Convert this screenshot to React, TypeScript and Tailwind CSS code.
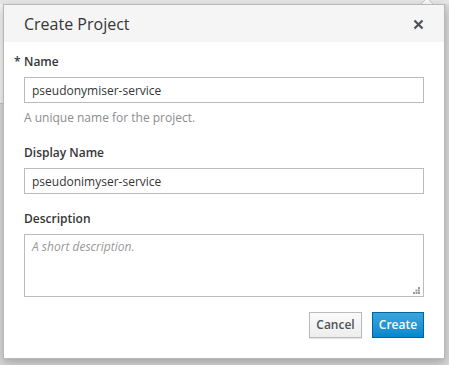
import React from "react";

export default function App() {
  return (
    <div
      className="relative w-[449px] h-[365px] overflow-hidden bg-[#d9d9d9]"
      style={{ fontFamily: '"Open Sans", "Liberation Sans", sans-serif' }}
    >
      {/* page behind */}
      <div className="absolute left-0 top-[4px] w-[3px] h-[100px] bg-[#f3f3f3] border-b border-[#c4c4c4]" />
      <div className="absolute left-0 top-0 w-full h-[4px] bg-[#e6e6e6]" />
      {/* popover arrow */}
      <svg className="absolute left-[418px] top-[-2px]" width="18" height="9" viewBox="0 0 18 9">
        <path d="M1 8 L9 0 L17 8 Z" fill="#fafafa" stroke="#c8c8c8" strokeWidth="1" />
      </svg>

      <div className="pt-[4px] pl-[3px]">
        <div className="w-[442px] h-[355px] bg-white border border-[#b8b8b8] shadow-[0_4px_10px_rgba(0,0,0,0.25)] flex flex-col relative">
          {/* header */}
          <div className="h-[37px] bg-[#f5f5f5] flex items-center justify-between pl-[20px] pr-[20px]">
            <h4 className="text-[16px] leading-[20px] text-[#363636] font-normal">Create Project</h4>
            <svg width="11" height="11" viewBox="0 0 11 11" className="mt-[1px]">
              <path d="M1.5 1.5 L9.5 9.5 M9.5 1.5 L1.5 9.5" stroke="#4d5258" strokeWidth="2.2" strokeLinecap="butt" />
            </svg>
          </div>

          {/* body */}
          <div className="pl-[20px] pr-[20px] pt-[11px] flex flex-col text-[12px] text-[#363636]">
            <label className="relative font-semibold leading-[18px] h-[18px]">
              <span className="absolute left-[-10px] top-0">*</span>
              Name
            </label>
            <input
              readOnly
              value="pseudonymiser-service"
              className="mt-[6px] w-[400px] h-[26px] border border-[#bbbbbb] px-[7px] text-[12px] text-[#363636] outline-none"
              style={{ fontFamily: '"Open Sans", "Liberation Sans", sans-serif' }}
            />
            <div className="mt-[6px] leading-[18px] text-[#8b8d8f]">A unique name for the project.</div>

            <label className="mt-[17px] font-semibold leading-[18px] h-[18px]">Display Name</label>
            <input
              readOnly
              value="pseudonimyser-service"
              className="mt-[6px] w-[400px] h-[26px] border border-[#bbbbbb] px-[7px] text-[12px] text-[#363636] outline-none"
              style={{ fontFamily: '"Open Sans", "Liberation Sans", sans-serif' }}
            />

            <label className="mt-[16px] font-semibold leading-[18px] h-[18px]">Description</label>
            <div className="relative mt-[6px] w-[400px] h-[63px]">
              <textarea
                readOnly
                placeholder="A short description."
                className="w-full h-full border border-[#bbbbbb] px-[7px] py-[3px] text-[12px] leading-[18px] resize-none outline-none placeholder:italic placeholder:text-[#999999]"
                style={{ fontFamily: '"Open Sans", "Liberation Sans", sans-serif' }}
              />
              <svg className="absolute right-[4px] bottom-[3px]" width="7" height="7" viewBox="0 0 7 7">
                <rect x="5" y="0" width="2" height="2" fill="#9a9a9a" />
                <rect x="2.5" y="2.5" width="2" height="2" fill="#9a9a9a" />
                <rect x="5" y="2.5" width="2" height="2" fill="#9a9a9a" />
                <rect x="0" y="5" width="2" height="2" fill="#9a9a9a" />
                <rect x="2.5" y="5" width="2" height="2" fill="#9a9a9a" />
                <rect x="5" y="5" width="2" height="2" fill="#9a9a9a" />
              </svg>
            </div>

            <div className="mt-[15px] flex justify-end gap-[10px]">
              <button className="w-[53px] h-[26px] border border-[#bbbbbb] bg-gradient-to-b from-[#fafafa] to-[#ededed] text-[12px] font-semibold text-[#4d5258] shadow-[0_1px_1px_rgba(0,0,0,0.1)]">
                Cancel
              </button>
              <button className="w-[52px] h-[26px] border border-[#00659c] bg-gradient-to-b from-[#39a5dc] to-[#0088ce] text-[12px] font-semibold text-white">
                Create
              </button>
            </div>
          </div>
        </div>
      </div>
    </div>
  );
}
